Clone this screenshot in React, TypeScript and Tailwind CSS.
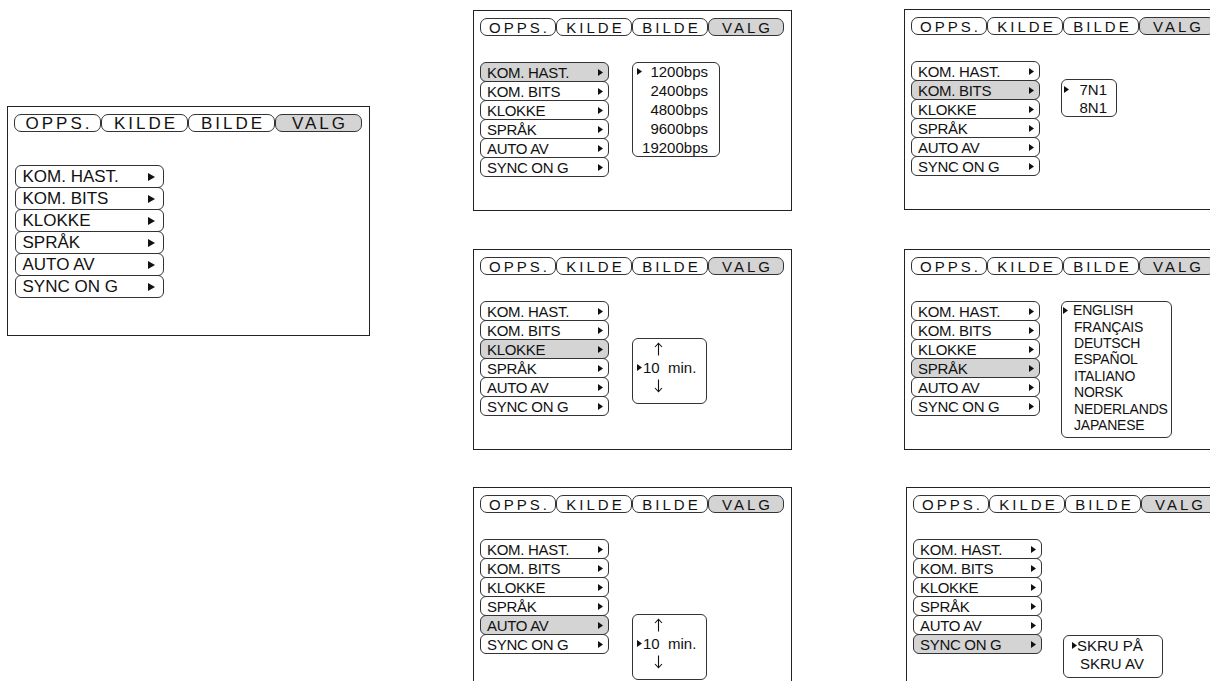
import React from 'react';

const Tri = ({ w, h, className = '' }: { w: number; h: number; className?: string }) => (
  <svg width={w} height={h} viewBox={`0 0 ${w} ${h}`} className={`shrink-0 ${className}`}>
    <polygon points={`0,0 ${w},${h / 2} 0,${h}`} fill="#111" />
  </svg>
);

const Arrow = ({ down }: { down?: boolean }) => (
  <svg width="9" height="14" viewBox="0 0 9 14" className={`shrink-0 ${down ? 'rotate-180' : ''}`}>
    <path d="M4.5 1.5 V13.5 M1 5 L4.5 1.2 L8 5" stroke="#111" strokeWidth="1.1" fill="none" />
  </svg>
);

const TABS = ['OPPS.', 'KILDE', 'BILDE', 'VALG'];
const ITEMS = ['KOM. HAST.', 'KOM. BITS', 'KLOKKE', 'SPRÅK', 'AUTO AV', 'SYNC ON G'];

function Tabs({ lg }: { lg?: boolean }) {
  return (
    <div className="flex">
      {TABS.map((t, i) => (
        <div
          key={t}
          className={`${
            lg
              ? 'w-[87px] h-[18px] text-[17px] tracking-[3px] pl-[3px]'
              : 'w-[76px] h-[18px] text-[15px] tracking-[3px] pl-[3px]'
          } flex items-center justify-center rounded-[7px] border border-[#333] leading-none shrink-0 ${
            i === 3 ? 'bg-[#d4d4d4]' : 'bg-white'
          }`}
        >
          {t}
        </div>
      ))}
    </div>
  );
}

function Menu({ lg, active }: { lg?: boolean; active?: number }) {
  return (
    <div className={`flex flex-col shrink-0 ${lg ? 'w-[149px] ml-px' : 'w-[129px]'}`}>
      {ITEMS.map((t, i) => (
        <div
          key={t}
          className={`flex items-center justify-between rounded-[6px] border border-[#333] leading-none ${
            lg ? 'h-[23px] pl-[6.5px] pr-[8px] text-[17px]' : 'h-[20px] pl-[6px] pr-[5px] text-[15px] tracking-[-0.3px]'
          } ${i > 0 ? '-mt-px' : ''} ${i === active ? 'bg-[#d4d4d4]' : 'bg-white'}`}
        >
          <span className="whitespace-nowrap">{t}</span>
          {lg ? <Tri w={7} h={8} /> : <Tri w={5} h={7} />}
        </div>
      ))}
    </div>
  );
}

function Panel({
  lg,
  active,
  children,
  className = '',
}: {
  lg?: boolean;
  active?: number;
  children?: React.ReactNode;
  className?: string;
}) {
  return (
    <div
      className={`${
        lg ? 'w-[363px] h-[230px]' : 'w-[319px] h-[201px]'
      } pt-[7px] pl-[6px] border border-[#222] bg-white shrink-0 ${className}`}
    >
      <Tabs lg={lg} />
      <div className={`flex items-start ${lg ? 'mt-[33px]' : 'mt-[26px]'}`}>
        <Menu lg={lg} active={active} />
        {children}
      </div>
    </div>
  );
}

const Box = ({ className = '', children }: { className?: string; children?: React.ReactNode }) => (
  <div className={`rounded-[6px] border border-[#333] bg-white shrink-0 leading-none ${className}`}>{children}</div>
);

function BpsBox() {
  const rows = ['1200bps', '2400bps', '4800bps', '9600bps', '19200bps'];
  return (
    <Box className="ml-[23px] w-[88px] h-[95px] text-[15px] flex flex-col">
      <div className="-mt-[1px]">
        {rows.map((t, i) => (
          <div key={t} className="flex h-[19px] items-center justify-between pl-[4px] pr-[11px]">
            {i === 0 ? <Tri w={5} h={7} /> : <span />}
            <span>{t}</span>
          </div>
        ))}
      </div>
    </Box>
  );
}

function BitsBox() {
  return (
    <Box className="ml-[21px] mt-[18px] w-[56px] h-[38px] text-[15px] flex flex-col">
      <div className="flex h-[18px] items-center justify-between pl-[2px] pr-[9px]">
        <Tri w={5} h={7} />
        <span>7N1</span>
      </div>
      <div className="flex h-[18px] items-center justify-end pl-[2px] pr-[9px]">
        <span>8N1</span>
      </div>
    </Box>
  );
}

function MinBox({ className = '' }: { className?: string }) {
  return (
    <Box className={`ml-[23px] w-[75px] h-[66px] text-[15px] flex flex-col pt-[1px] ${className}`}>
      <div className="h-[18.5px] flex items-center pl-[21px]">
        <Arrow />
      </div>
      <div className="h-[18.5px] flex items-center pl-[4px]">
        <Tri w={5} h={7} />
        <span className="ml-[1px] whitespace-nowrap">10&nbsp;&nbsp;min.</span>
      </div>
      <div className="h-[18.5px] flex items-center pl-[21px]">
        <Arrow down />
      </div>
    </Box>
  );
}

function LangBox() {
  const langs = ['ENGLISH', 'FRANÇAIS', 'DEUTSCH', 'ESPAÑOL', 'ITALIANO', 'NORSK', 'NEDERLANDS', 'JAPANESE'];
  return (
    <Box className="ml-[21px] w-[111px] h-[137px] text-[14px] tracking-[-0.2px] flex flex-col">
      {langs.map((t, i) =>
        i === 0 ? (
          <div key={t} className="h-[16.4px] flex items-center pl-[1px]">
            <Tri w={5} h={7} />
            <span className="ml-[5px]">{t}</span>
          </div>
        ) : (
          <div key={t} className="h-[16.4px] flex items-center pl-[12px] whitespace-nowrap">
            {t}
          </div>
        )
      )}
    </Box>
  );
}

function SyncBox() {
  return (
    <Box className="ml-[21px] mt-[96px] w-[100px] h-[43px] text-[15px] flex flex-col pt-[1px]">
      <div className="h-[17.5px] flex items-center pl-[8px]">
        <Tri w={5} h={7} />
        <span className="whitespace-nowrap">SKRU PÅ</span>
      </div>
      <div className="h-[17.5px] flex items-center pl-[16px] whitespace-nowrap">SKRU AV</div>
    </Box>
  );
}

export default function App() {
  return (
    <div className="w-[1210px] h-[681px] overflow-hidden bg-white flex font-['Liberation_Sans',Arial,sans-serif] text-[#111]">
      <div className="w-[473px] shrink-0 pl-[7px] pt-[106px]">
        <Panel lg />
      </div>
      <div className="w-[431px] shrink-0 pt-[10px] flex flex-col">
        <Panel active={0}>
          <BpsBox />
        </Panel>
        <Panel active={2} className="mt-[38px]">
          <MinBox className="mt-[37px]" />
        </Panel>
        <Panel active={4} className="mt-[37px]">
          <MinBox className="mt-[75px]" />
        </Panel>
      </div>
      <div className="shrink-0 pt-[9px] flex flex-col">
        <Panel active={1}>
          <BitsBox />
        </Panel>
        <Panel active={3} className="mt-[39px]">
          <LangBox />
        </Panel>
        <Panel active={5} className="mt-[37px] ml-[2px]">
          <SyncBox />
        </Panel>
      </div>
    </div>
  );
}
